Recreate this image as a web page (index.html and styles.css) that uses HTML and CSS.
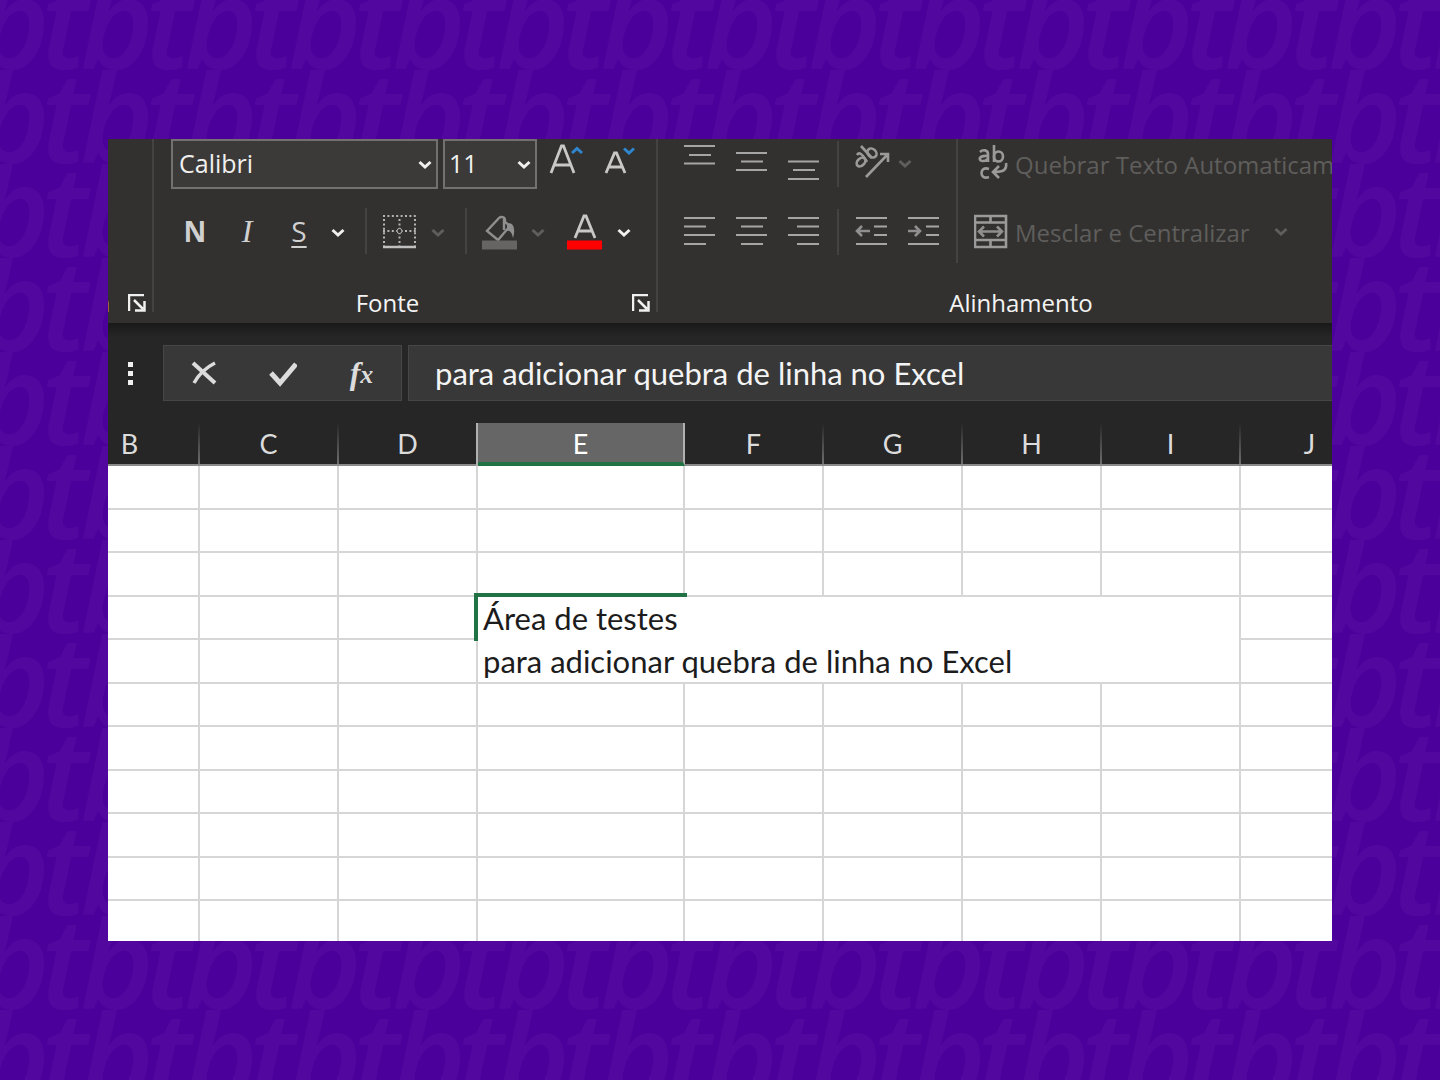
FILE: index.html
```html
<!DOCTYPE html>
<html lang="pt-BR">

<head>
    <meta charset="UTF-8">
    <meta name="viewport" content="width=device-width, initial-scale=1.0">
    <title>Quebra de linha no Excel</title>
    <link rel="stylesheet" href="styles.css">
</head>

<body>
    <svg class="backdrop" aria-hidden="true">
        <defs>
            <pattern id="logo" x="44" y="70" width="104" height="94" patternUnits="userSpaceOnUse">
                <text class="logo-letter" x="-3" y="93">t</text>
                <text class="logo-letter" x="36" y="93">b</text>
            </pattern>
            <symbol id="chevron" viewBox="0 0 14 10">
                <path d="M1.500 2l5.500 5 5.500-5" fill="none" stroke="currentColor" stroke-width="3" />
            </symbol>
            <symbol id="launcher" viewBox="0 0 18 18">
                <path d="M1 17V1h15M6 6l9 9M16.500 7v9.500H7" fill="none" stroke="currentColor" stroke-width="2.500" />
            </symbol>
        </defs>
        <rect width="100%" height="100%" fill="url(#logo)" />
    </svg>

    <main class="window">
        <div class="ribbon">
            <section class="group group-clipboard">
                <div class="group-footer">
                    <span class="group-name">a</span>
                    <button type="button" class="launcher" aria-label="Opções da Área de Transferência"><svg><use href="#launcher" /></svg></button>
                </div>
            </section>

            <section class="group group-font">
                <div class="row row-font">
                    <div class="dropdown dropdown-font">
                        <select aria-label="Fonte">
                            <option>Calibri</option>
                        </select>
                        <svg class="chevron"><use href="#chevron" /></svg>
                    </div>
                    <div class="dropdown dropdown-size">
                        <select aria-label="Tamanho da fonte">
                            <option>11</option>
                        </select>
                        <svg class="chevron"><use href="#chevron" /></svg>
                    </div>
                    <button type="button" class="tool" aria-label="Aumentar tamanho da fonte">
                        <svg viewBox="0 0 52 50">
                            <path d="M9 34L19.500 7h2L32 34M12.500 26h16" stroke="#c8c8c8" stroke-width="2.800" />
                            <path d="M30 14l5-4.500 5 4.500" stroke="#2f86cf" stroke-width="3" />
                        </svg>
                    </button>
                    <button type="button" class="tool" aria-label="Diminuir tamanho da fonte">
                        <svg viewBox="0 0 52 50">
                            <path d="M12 34L20.500 14h2L31 34M15 28h13" stroke="#c8c8c8" stroke-width="2.800" />
                            <path d="M30 9.500l5 4.500 5-4.500" stroke="#2f86cf" stroke-width="3" />
                        </svg>
                    </button>
                </div>
                <div class="row">
                    <button type="button" class="tool letter bold">N</button>
                    <button type="button" class="tool letter italic">I</button>
                    <button type="button" class="tool letter underline">S</button>
                    <button type="button" class="arrow" aria-label="Mais sublinhados"><svg class="chevron"><use href="#chevron" /></svg></button>
                    <span class="divider"></span>
                    <button type="button" class="tool" aria-label="Bordas">
                        <svg viewBox="0 0 52 50">
                            <path d="M10 10h33M10 25h33" stroke="#b4b4b4" stroke-width="2" stroke-dasharray="2 2.400" />
                            <path d="M11 13v27M26.500 13v27M42 13v27" stroke="#b4b4b4" stroke-width="2" stroke-dasharray="2 2.400" />
                            <circle cx="26.500" cy="25" r="2.500" stroke="#b4b4b4" fill="#32312f" />
                            <path d="M10 41h33" stroke="#c0c0c0" stroke-width="2.500" />
                        </svg>
                    </button>
                    <button type="button" class="arrow dim" aria-label="Mais bordas"><svg class="chevron"><use href="#chevron" /></svg></button>
                    <span class="divider"></span>
                    <button type="button" class="tool" aria-label="Cor de preenchimento">
                        <svg viewBox="0 0 52 50">
                            <path d="M26 12L14 25l11 9 12-14-5-4v-2c0-3-4-4-6-2M31 13v11" stroke="#8f8f8f" stroke-width="2.400" />
                            <path d="M34 18c6-3 9 5 6 14-1-5-3-8-6-7z" fill="#8f8f8f" />
                            <path d="M9 39h35" stroke="#666563" stroke-width="9" />
                        </svg>
                    </button>
                    <button type="button" class="arrow dim" aria-label="Mais cores de preenchimento"><svg class="chevron"><use href="#chevron" /></svg></button>
                    <button type="button" class="tool font-color" aria-label="Cor da fonte">
                        <svg viewBox="0 0 52 50">
                            <path d="M16 32L25 10h2l9 22M19.500 25h13" stroke="#c8c8c8" stroke-width="2.800" />
                            <path d="M8 39h35" stroke="#f00" stroke-width="9" />
                        </svg>
                    </button>
                    <button type="button" class="arrow" aria-label="Mais cores da fonte"><svg class="chevron"><use href="#chevron" /></svg></button>
                </div>
                <div class="group-footer">
                    <span class="group-name">Fonte</span>
                    <button type="button" class="launcher" aria-label="Configurações da fonte"><svg><use href="#launcher" /></svg></button>
                </div>
            </section>

            <section class="group group-align">
                <div class="columns">
                    <div class="column">
                        <div class="row">
                            <button type="button" class="tool" aria-label="Alinhar em cima"><svg viewBox="0 0 52 50"><path class="line" d="M10 7h31M15 16h22M10 24.500h31" /></svg></button>
                            <button type="button" class="tool" aria-label="Alinhar no meio"><svg viewBox="0 0 52 50"><path class="line" d="M10 14h31M15 22.500h22M10 31h31" /></svg></button>
                            <button type="button" class="tool" aria-label="Alinhar embaixo"><svg viewBox="0 0 52 50"><path class="line" d="M10 22.500h31M15 31h22M10 40h31" /></svg></button>
                            <span class="divider"></span>
                            <button type="button" class="tool" aria-label="Orientação">
                                <svg viewBox="0 0 52 50">
                                    <g stroke="#9a9a9a" stroke-width="2.600">
                                        <ellipse cx="15" cy="23" rx="5" ry="3.500" transform="rotate(-45 15 23)" />
                                        <path d="M11 16c2-3 5-2 10 7" />
                                        <ellipse cx="26" cy="14" rx="4" ry="5" transform="rotate(-45 26 14)" />
                                        <path d="M15 7l11 12" />
                                        <path d="M20 38l22-23M34 15h8v8" />
                                    </g>
                                </svg>
                            </button>
                            <button type="button" class="arrow slim dim" aria-label="Mais orientações"><svg class="chevron"><use href="#chevron" /></svg></button>
                        </div>
                        <div class="row">
                            <button type="button" class="tool" aria-label="Alinhar à esquerda"><svg viewBox="0 0 52 50"><path class="line" d="M10 11h31M10 19.500h22M10 28h31M10 37h22" /></svg></button>
                            <button type="button" class="tool" aria-label="Centralizar"><svg viewBox="0 0 52 50"><path class="line" d="M10 11h31M15 19.500h22M10 28h31M15 37h22" /></svg></button>
                            <button type="button" class="tool" aria-label="Alinhar à direita"><svg viewBox="0 0 52 50"><path class="line" d="M10 11h31M19 19.500h22M10 28h31M19 37h22" /></svg></button>
                            <span class="divider"></span>
                            <button type="button" class="tool" aria-label="Diminuir recuo"><svg viewBox="0 0 52 50"><path class="line" d="M10 11h31M28 19.500h13M28 28h13M10 37h31" /><path d="M24 24H12M16 19l-5 5 5 5" stroke="#8f8f8f" stroke-width="2.600" /></svg></button>
                            <button type="button" class="tool" aria-label="Aumentar recuo"><svg viewBox="0 0 52 50"><path class="line" d="M10 11h31M28 19.500h13M28 28h13M10 37h31" /><path d="M10 24h12M17 19l5 5-5 5" stroke="#8f8f8f" stroke-width="2.600" /></svg></button>
                        </div>
                    </div>
                    <div class="column column-cells">
                        <button type="button" class="command">
                            <svg viewBox="0 0 34 50">
                                <g stroke="#9a9a9a" stroke-width="2.600">
                                    <path d="M6 13c3-3 8-2 8 2v8M14 17c-10-1-10 5-5 5 3 0 5-2 5-4" />
                                    <path d="M20 6v17" />
                                    <ellipse cx="24.500" cy="17.500" rx="4.500" ry="5" />
                                    <path d="M15 30c-10-4-10 12 0 8" />
                                    <path d="M32 24c1 7-2 9-13 9M25 27l-6 6 6 6" />
                                </g>
                            </svg>
                            <span>Quebrar Texto Automaticamente</span>
                        </button>
                        <button type="button" class="command">
                            <svg viewBox="0 0 34 50">
                                <path d="M1 9h31v31H1zM1 15.500h31M1 33h31M16.500 9v7M16.500 33v7" stroke="#9a9a9a" stroke-width="2.600" />
                                <path d="M6 24.500h21M10 19.500l-5 5 5 5M23 19.500l5 5-5 5" stroke="#8f8f8f" stroke-width="2.600" />
                            </svg>
                            <span>Mesclar e Centralizar</span>
                            <svg class="chevron"><use href="#chevron" /></svg>
                        </button>
                    </div>
                </div>
                <div class="group-footer">
                    <span class="group-name">Alinhamento</span>
                </div>
            </section>
        </div>

        <div class="formula-bar">
            <span class="dots"><i></i><i></i><i></i></span>
            <div class="formula-actions">
                <button type="button" aria-label="Cancelar"><svg viewBox="0 0 28 28"><path d="M3 4l22 20" stroke="#dcdcdc" stroke-width="4" /><path d="M25 4C17 8 9 15 4 24" stroke="#dcdcdc" stroke-width="3.500" /></svg></button>
                <button type="button" aria-label="Inserir"><svg viewBox="0 0 28 28"><path d="M2 14l9 10L27 5" stroke="#dcdcdc" stroke-width="5" /></svg></button>
                <button type="button" class="fx" aria-label="Inserir função">f<small>x</small></button>
            </div>
            <input type="text" class="formula-input" aria-label="Barra de fórmulas" value="para adicionar quebra de linha no Excel">
        </div>

        <div class="sheet">
            <table>
                <colgroup>
                    <col span="3">
                    <col class="col-wide">
                    <col span="5">
                </colgroup>
                <thead>
                    <tr>
                        <th>B</th>
                        <th>C</th>
                        <th>D</th>
                        <th class="selected">E</th>
                        <th>F</th>
                        <th>G</th>
                        <th>H</th>
                        <th>I</th>
                        <th>J</th>
                    </tr>
                </thead>
                <tbody>
                    <tr><td></td><td></td><td></td><td></td><td></td><td></td><td></td><td></td><td></td></tr>
                    <tr><td></td><td></td><td></td><td></td><td></td><td></td><td></td><td></td><td></td></tr>
                    <tr><td></td><td></td><td></td><td></td><td></td><td></td><td></td><td></td><td></td></tr>
                    <tr>
                        <td></td><td></td><td></td>
                        <td class="editing" colspan="5" rowspan="2">
                            <textarea rows="2" aria-label="Célula E4">Área de testes
para adicionar quebra de linha no Excel</textarea>
                            <span class="cell-outline"></span>
                        </td>
                        <td></td>
                    </tr>
                    <tr><td></td><td></td><td></td><td></td></tr>
                    <tr><td></td><td></td><td></td><td></td><td></td><td></td><td></td><td></td><td></td></tr>
                    <tr><td></td><td></td><td></td><td></td><td></td><td></td><td></td><td></td><td></td></tr>
                    <tr><td></td><td></td><td></td><td></td><td></td><td></td><td></td><td></td><td></td></tr>
                    <tr><td></td><td></td><td></td><td></td><td></td><td></td><td></td><td></td><td></td></tr>
                    <tr><td></td><td></td><td></td><td></td><td></td><td></td><td></td><td></td><td></td></tr>
                    <tr><td></td><td></td><td></td><td></td><td></td><td></td><td></td><td></td><td></td></tr>
                </tbody>
            </table>
        </div>
    </main>
</body>

</html>
```
FILE: styles.css
```css
* {
    box-sizing: border-box;
}

body {
    margin: 0;
    min-height: 100vh;
    padding: 139px 108px;
    background: #4b009b;
    font-family: "Open Sans", "Noto Sans", sans-serif;
}

button {
    padding: 0;
    border: none;
    background: none;
    color: #f0f0f0;
    font-family: inherit;
}

svg {
    display: block;
    fill: none;
}

.backdrop {
    position: absolute;
    top: 0;
    left: 0;
    z-index: -1;
    width: 100%;
    height: 100%;
}

.logo-letter {
    font-family: "Open Sans", sans-serif;
    font-size: 126px;
    font-style: italic;
    font-weight: 600;
    fill: #52089e;
}

.window {
    overflow: hidden;
    background: #262626;
}

/* Ribbon */

.ribbon {
    display: flex;
    padding-bottom: 11px;
    background: #32312f;
}

.group {
    display: flex;
    flex: none;
    flex-direction: column;
    gap: 18px;
    height: 173px;
    border-right: 2px solid #444341;
}

.group-clipboard {
    width: 46px;
}

.group-font {
    gap: 17px;
    width: 504px;
    padding-left: 15px;
}

.group-align {
    width: 762px;
    padding-left: 16px;
}

.row {
    display: flex;
    align-items: center;
    height: 50px;
}

.row-font {
    padding-left: 2px;
}

.tool {
    flex: none;
    width: 52px;
    height: 50px;
}

.tool svg {
    width: 52px;
    height: 50px;
}

.line {
    stroke: #a5a5a5;
    stroke-width: 2;
}

.chevron {
    flex: none;
    width: 14px;
    height: 10px;
}

.arrow {
    display: flex;
    align-items: center;
    justify-content: center;
    width: 26px;
    height: 50px;
    padding-top: 4px;
}

.arrow.slim {
    width: 14px;
    padding-top: 0;
}

.dim {
    color: #5f5e5c;
}

.divider {
    width: 2px;
    height: 46px;
    margin: 0 6px 0 14px;
    background: #444341;
}

.column .divider {
    margin: 0 7px;
}

.font-color {
    margin-left: 8px;
}

.letter {
    color: #d0d0d0;
    font-size: 28px;
    line-height: 48px;
}

.bold {
    font-weight: 700;
}

.italic {
    font-family: "Liberation Serif", serif;
    font-size: 32px;
    font-style: italic;
}

.underline {
    text-decoration: underline;
    text-decoration-thickness: 2px;
    text-underline-offset: 4px;
}

.dropdown {
    position: relative;
    height: 50px;
    margin-right: 5px;
    color: #f0f0f0;
}

.dropdown select {
    width: 100%;
    height: 100%;
    padding: 0 6px 2px;
    appearance: none;
    border: 2px solid #72716f;
    border-radius: 0;
    background: #3b3a38;
    color: #f0f0f0;
    font-family: inherit;
    font-size: 25px;
}

.dropdown .chevron {
    position: absolute;
    top: 21px;
    right: 6px;
}

.dropdown-font {
    width: 267px;
}

.dropdown-size {
    width: 94px;
}

.dropdown-size select {
    padding-left: 4px;
}

.columns {
    display: flex;
}

.column {
    display: flex;
    flex-direction: column;
    gap: 18px;
    width: 282px;
}

.column-cells {
    flex: 1;
    height: 124px;
    padding-left: 16px;
    border-left: 2px solid #444341;
}

.command {
    display: flex;
    align-items: center;
    height: 50px;
    color: #5f5e5c;
    font-size: 24px;
    white-space: nowrap;
}

.command svg {
    width: 34px;
    height: 50px;
    margin-right: 7px;
}

.command .chevron {
    width: 14px;
    height: 10px;
    margin-left: 24px;
}

.group-footer {
    display: flex;
    align-items: center;
    height: 18px;
    margin-top: auto;
}

.group-font .group-footer {
    margin-left: -15px;
}

.group-align .group-footer {
    padding-right: 50px;
}

.group-name {
    display: flex;
    flex: 1;
    justify-content: center;
    color: #f4f4f4;
    font-size: 24px;
    font-weight: 500;
    line-height: 18px;
}

.group-clipboard .group-name {
    justify-content: flex-end;
    overflow: hidden;
    margin-right: 7px;
}

.launcher {
    flex: none;
    width: 18px;
    height: 18px;
    margin: 0 6px 0 11px;
}

.launcher svg {
    width: 18px;
    height: 18px;
}

/* Formula bar */

.formula-bar {
    display: flex;
    align-items: center;
    height: 100px;
    background: linear-gradient(#191919, #262626 14px);
}

.dots {
    display: flex;
    flex-direction: column;
    align-items: center;
    gap: 4px;
    width: 44px;
    margin-right: 11px;
}

.dots i {
    width: 5px;
    height: 5px;
    background: #f0f0f0;
}

.formula-actions {
    display: flex;
    align-items: center;
    width: 239px;
    height: 56px;
    margin-right: 6px;
    border: 1px solid #464646;
    background: #383838;
}

.formula-actions button {
    display: flex;
    align-items: center;
    justify-content: center;
    width: 79px;
    height: 54px;
}

.formula-actions svg {
    width: 28px;
    height: 28px;
}

.formula-actions .fx {
    color: #dcdcdc;
    font-family: "Liberation Serif", serif;
    font-size: 32px;
    font-style: italic;
    font-weight: 700;
}

.fx small {
    margin-top: 4px;
    font-size: 26px;
}

.formula-input {
    flex: 1;
    min-width: 0;
    height: 56px;
    padding: 0 26px;
    border: 1px solid #464646;
    border-right: none;
    border-radius: 0;
    background: #383838;
    color: #f4f4f4;
    font-family: Lato, sans-serif;
    font-size: 31px;
}

/* Sheet */

.sheet {
    overflow: hidden;
    background: #fff;
}

table {
    width: 1319px;
    margin-left: -47px;
    border-spacing: 0;
    table-layout: fixed;
}

col {
    width: 139px;
}

.col-wide {
    width: 207px;
}

th {
    height: 43px;
    padding: 0 2px 0 0;
    border-bottom: 2px solid #8a8a8a;
    background: linear-gradient(#262626, #6e6e6e) right / 2px 100% no-repeat #262626;
    color: #dcdcdc;
    font-family: Lato, sans-serif;
    font-size: 27px;
    font-weight: 400;
    line-height: 40px;
}

th.selected {
    padding: 2px 0 0;
    border-right: 2px solid #b0b0b0;
    border-bottom: 4px solid #217346;
    background: #666;
    box-shadow: -2px 0 #b0b0b0;
    color: #fff;
    line-height: 36px;
}

td {
    height: 44px;
    padding: 0;
    border-right: 2px solid #d6d6d6;
    border-bottom: 2px solid #d6d6d6;
}

tr:nth-child(even) td {
    height: 43px;
}

tr:last-child td {
    height: 40px;
    border-bottom: none;
}

tbody .editing {
    position: relative;
    height: 87px;
    vertical-align: top;
}

.editing textarea {
    display: block;
    width: 100%;
    height: 85px;
    padding: 0 5px;
    overflow: hidden;
    resize: none;
    border: none;
    background: #fff;
    color: #1c1c1c;
    font-family: Lato, sans-serif;
    font-size: 31px;
    line-height: 43px;
}

.cell-outline {
    position: absolute;
    top: -4px;
    left: -4px;
    width: 213px;
    height: 48px;
    border-top: 4px solid #217346;
    border-left: 4px solid #217346;
}
```
